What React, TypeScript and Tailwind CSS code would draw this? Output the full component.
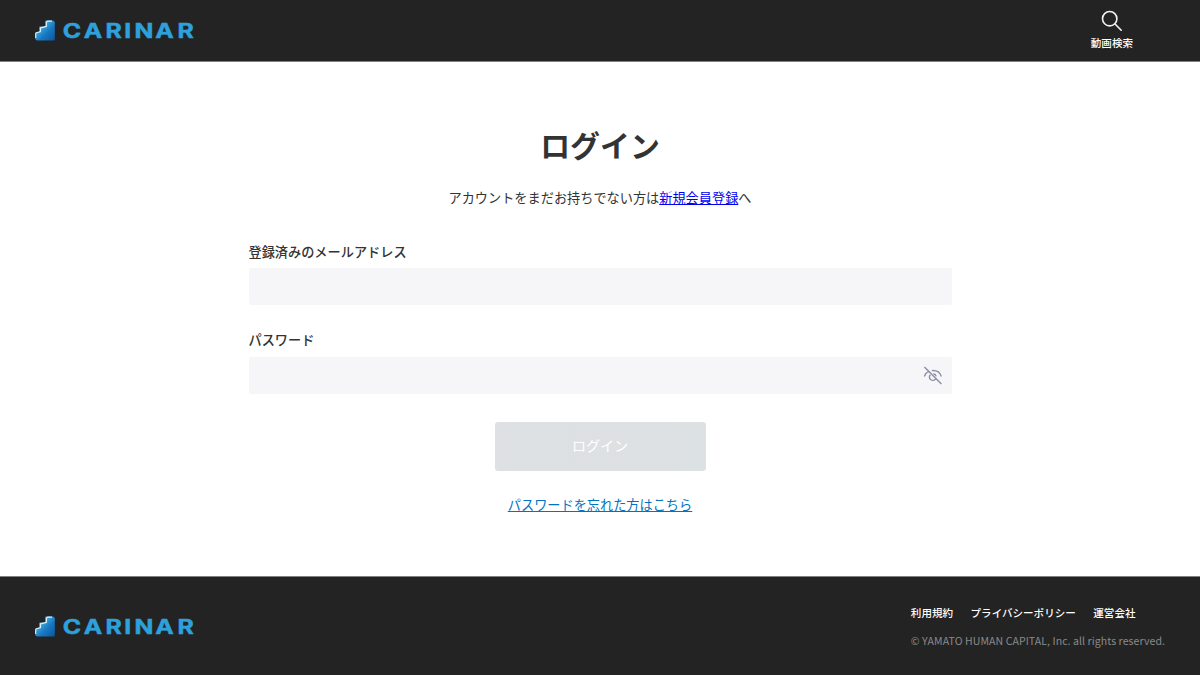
function Logo({ id }: { id: string }) {
  return (
    <svg className="block h-6 w-[164px]" viewBox="0 0 164 24" role="img" aria-label="CARINAR">
      <defs>
        <linearGradient id={id} x1="0" y1="0" x2="1" y2="1">
          <stop offset="0.2" stopColor="#55b9e8" />
          <stop offset="0.6" stopColor="#1779c2" />
          <stop offset="1" stopColor="#0c559f" />
        </linearGradient>
      </defs>
      <g transform="translate(-0.8 0)">
        <path
          d="M2 15.2Q2 14.2 3 14.2H6V9.6Q6 8.6 7 8.6H12V3.5Q12 2.5 13 2.5H19Q21.6 2.5 21.6 4.5V21Q21.6 22.5 20 22.5H4.5Q2 22.5 2 20Z"
          fill={`url(#${id})`}
        />
        <path
          d="M2.5 20V15.4L3.2 14.8L7.3 13.6V9.9L13.2 8.4V4.4L14.4 3.1H18.8"
          fill="none"
          stroke="#d9f2fb"
          strokeWidth="1.1"
          strokeLinejoin="round"
        />
      </g>
      <text
        transform="scale(1.28 1)"
        x="29.7 46.1 62.3 73.3 85.9 101.9 118.4"
        y="20.4"
        textAnchor="middle"
        fill="#2ea1dc"
        stroke="#2ea1dc"
        strokeWidth="0.45"
        className="font-['Inter',sans-serif] text-[19.4px] font-bold"
      >
        CARINAR
      </text>
    </svg>
  );
}

function SearchIcon() {
  return (
    <svg className="block h-[21px] w-[21px]" viewBox="0 0 21 21" fill="none" stroke="#f2f2f2" strokeWidth="1.6">
      <circle cx="8.7" cy="8.7" r="7.2" />
      <path d="M13.8 13.8L20.2 20.2" strokeLinecap="round" />
    </svg>
  );
}

function HiddenEyeIcon() {
  return (
    <svg className="block h-5 w-5" viewBox="0 0 20 20" fill="none" stroke="#8d91a5" strokeWidth="1.4">
      <path d="M1.3 10.5C2.3 7.8 4 6.1 6.2 5.2M8.8 4.6C13.3 4.2 17 6.4 18.4 10.5" />
      <path d="M7.3 8.7A3.4 3.4 0 1 0 12.8 12.6M10.4 7.7A3.3 3.3 0 0 1 13.2 10.3" />
      <path d="M1.4 1L18.4 18" strokeWidth="1.5" />
    </svg>
  );
}

export default function App() {
  return (
    <div className="flex h-[675px] w-full flex-col overflow-hidden bg-white font-['Noto_Sans_CJK_JP',sans-serif] text-[13.18px] text-[#333]">
      <header className="flex h-[62px] shrink-0 items-start justify-between border-b border-[#808080] bg-[#232323] pr-[67px] pl-[34px]">
        <a href="#" className="mt-[18px]">
          <Logo id="header-steps" />
        </a>
        <a href="#" className="mt-[10px] flex flex-col items-center text-white">
          <SearchIcon />
          <span className="mt-1 text-[10.55px] leading-4 font-medium">動画検索</span>
        </a>
      </header>

      <main className="flex w-[703px] grow flex-col items-center self-center">
        <h1 className="mt-[60px] text-[29.9px] leading-[44px] font-bold">ログイン</h1>
        <p className="mt-[22px] leading-5">
          アカウントをまだお持ちでない方は
          <a href="#" className="text-[#0000ee] underline">新規会員登録</a>へ
        </p>
        <form className="mt-[34px] flex w-full flex-col" onSubmit={(e) => e.preventDefault()}>
          <label htmlFor="email" className="leading-5 font-medium">登録済みのメールアドレス</label>
          <input id="email" type="email" className="mt-[6px] h-[37px] rounded-[2px] bg-[#f6f6f9] px-3 outline-none" />
          <label htmlFor="password" className="mt-[25px] leading-5 font-medium">パスワード</label>
          <div className="mt-[7px] flex h-[37px] items-center rounded-[2px] bg-[#f6f6f9] pr-[9px]">
            <input id="password" type="password" className="h-full grow px-3 outline-none" />
            <button type="button" aria-label="パスワードを表示">
              <HiddenEyeIcon />
            </button>
          </div>
          <button
            type="submit"
            disabled
            className="mt-7 h-[49px] w-[211px] self-center rounded-[3px] bg-linear-to-r from-[#dee0e4] to-[#dce1e2] pb-[2px] text-[14.06px] text-white"
          >
            ログイン
          </button>
        </form>
        <a href="#" className="mt-6 leading-5 text-[#0074bf] underline">パスワードを忘れた方はこちら</a>
      </main>

      <footer className="flex h-[99px] shrink-0 justify-between border-t border-[#808080] bg-[#232323] pr-[35px] pl-[34px]">
        <a href="#" className="mt-[37px]">
          <Logo id="footer-steps" />
        </a>
        <div className="mt-[27.5px] flex flex-col text-[10.55px] leading-4">
          <nav className="flex gap-[17.5px] font-medium text-white">
            <a href="#">利用規約</a>
            <a href="#">プライバシーポリシー</a>
            <a href="#">運営会社</a>
          </nav>
          <small className="mt-3 text-[10.55px] leading-4 tracking-[0.07px] whitespace-nowrap text-[#8a8a8a]">
            © YAMATO HUMAN CAPITAL, Inc. all rights reserved.
          </small>
        </div>
      </footer>
    </div>
  );
}
